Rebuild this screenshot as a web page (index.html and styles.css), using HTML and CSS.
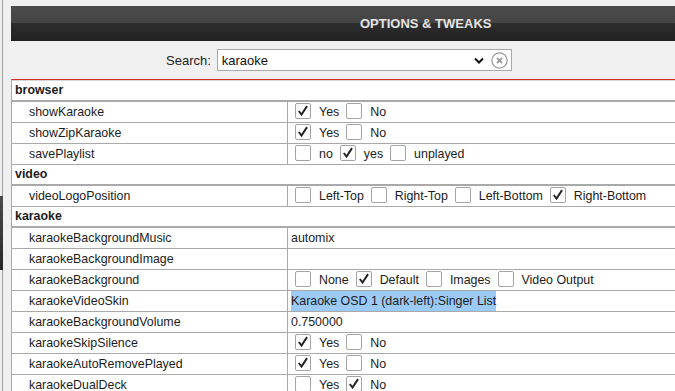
FILE: index.html
```html
<!DOCTYPE html>
<html lang="en">
<head>
    <meta charset="UTF-8">
    <meta name="viewport" content="width=device-width, initial-scale=1.0">
    <link rel="stylesheet" href="styles.css">
</head>
<body>
    <div class="edge">
        <div class="edge-thumb"></div>
    </div>
    <div class="main">
        <div class="titlebar">
            <h1>OPTIONS &amp; TWEAKS</h1>
        </div>

        <div class="search-row">
            <label for="search">Search:</label>
            <div class="search-box">
                <input type="text" id="search" value="karaoke">
                <svg class="chevron" width="10" height="7" viewBox="0 0 10 7"><path d="M1 1.5 L5 5.5 L9 1.5" fill="none" stroke="#111" stroke-width="2"/></svg>
                <svg class="clear" width="17" height="17" viewBox="0 0 17 17"><circle cx="8.5" cy="8.5" r="7.6" fill="none" stroke="#9a9a9a" stroke-width="1.3"/><path d="M6 6 L11 11 M11 6 L6 11" stroke="#9a9a9a" stroke-width="1.8"/></svg>
            </div>
        </div>

        <div class="options">
            <div class="group first">browser</div>
            <div class="opt">
                <div class="opt-name">showKaraoke</div>
                <div class="opt-value checks">
                    <span class="cb on"><svg viewBox="0 0 16 16"><path d="M3.2 8 L6.3 12 L12.6 2.4"/></svg></span><span class="lbl">Yes</span>
                    <span class="cb"></span><span class="lbl">No</span>
                </div>
            </div>
            <div class="opt">
                <div class="opt-name">showZipKaraoke</div>
                <div class="opt-value checks">
                    <span class="cb on"><svg viewBox="0 0 16 16"><path d="M3.2 8 L6.3 12 L12.6 2.4"/></svg></span><span class="lbl">Yes</span>
                    <span class="cb"></span><span class="lbl">No</span>
                </div>
            </div>
            <div class="opt">
                <div class="opt-name">savePlaylist</div>
                <div class="opt-value checks">
                    <span class="cb"></span><span class="lbl">no</span>
                    <span class="cb on"><svg viewBox="0 0 16 16"><path d="M3.2 8 L6.3 12 L12.6 2.4"/></svg></span><span class="lbl">yes</span>
                    <span class="cb"></span><span class="lbl">unplayed</span>
                </div>
            </div>

            <div class="group">video</div>
            <div class="opt">
                <div class="opt-name">videoLogoPosition</div>
                <div class="opt-value checks">
                    <span class="cb"></span><span class="lbl">Left-Top</span>
                    <span class="cb"></span><span class="lbl">Right-Top</span>
                    <span class="cb"></span><span class="lbl">Left-Bottom</span>
                    <span class="cb on"><svg viewBox="0 0 16 16"><path d="M3.2 8 L6.3 12 L12.6 2.4"/></svg></span><span class="lbl">Right-Bottom</span>
                </div>
            </div>

            <div class="group">karaoke</div>
            <div class="opt">
                <div class="opt-name">karaokeBackgroundMusic</div>
                <div class="opt-value">automix</div>
            </div>
            <div class="opt">
                <div class="opt-name">karaokeBackgroundImage</div>
                <div class="opt-value"></div>
            </div>
            <div class="opt">
                <div class="opt-name">karaokeBackground</div>
                <div class="opt-value checks">
                    <span class="cb"></span><span class="lbl">None</span>
                    <span class="cb on"><svg viewBox="0 0 16 16"><path d="M3.2 8 L6.3 12 L12.6 2.4"/></svg></span><span class="lbl">Default</span>
                    <span class="cb"></span><span class="lbl">Images</span>
                    <span class="cb"></span><span class="lbl">Video Output</span>
                </div>
            </div>
            <div class="opt">
                <div class="opt-name">karaokeVideoSkin</div>
                <div class="opt-value"><span class="selected">Karaoke OSD 1 (dark-left):Singer List</span></div>
            </div>
            <div class="opt">
                <div class="opt-name">karaokeBackgroundVolume</div>
                <div class="opt-value">0.750000</div>
            </div>
            <div class="opt">
                <div class="opt-name">karaokeSkipSilence</div>
                <div class="opt-value checks">
                    <span class="cb on"><svg viewBox="0 0 16 16"><path d="M3.2 8 L6.3 12 L12.6 2.4"/></svg></span><span class="lbl">Yes</span>
                    <span class="cb"></span><span class="lbl">No</span>
                </div>
            </div>
            <div class="opt">
                <div class="opt-name">karaokeAutoRemovePlayed</div>
                <div class="opt-value checks">
                    <span class="cb on"><svg viewBox="0 0 16 16"><path d="M3.2 8 L6.3 12 L12.6 2.4"/></svg></span><span class="lbl">Yes</span>
                    <span class="cb"></span><span class="lbl">No</span>
                </div>
            </div>
            <div class="opt">
                <div class="opt-name">karaokeDualDeck</div>
                <div class="opt-value checks">
                    <span class="cb"></span><span class="lbl">Yes</span>
                    <span class="cb on"><svg viewBox="0 0 16 16"><path d="M3.2 8 L6.3 12 L12.6 2.4"/></svg></span><span class="lbl">No</span>
                </div>
            </div>
        </div>
    </div>
</body>
</html>
```

FILE: styles.css
```css
body {
    font-family: "Liberation Sans", Arial, Helvetica, sans-serif;
    background-color: #f0f0f0;
    color: #1c1c1c;
    height: 100vh;
    margin: 0;
    display: flex;
    overflow: hidden;
}

/* thin edge of the panel on the left */
.edge {
    width: 2px;
    border-right: 1px solid #9c9c9c;
    margin-right: 8px;
}
.edge-thumb {
    margin-top: 196px;
    height: 74px;
    width: 3px;
    background: linear-gradient(#4a4a4a, #2a2a2a);
}

.main {
    flex: 1;
    min-width: 0;
    padding-top: 6px;
    overflow: hidden;
}

.titlebar {
    height: 35px;
    background: linear-gradient(#4b4b4b, #444 48%, #2d2d2d 50%, #222);
}
.titlebar h1 {
    margin: 0;
    padding: 1px 0 0 349px;
    font-size: 13px;
    line-height: 34px;
    font-weight: bold;
    color: #e4e4e4;
    white-space: nowrap;
}

.search-row {
    display: flex;
    align-items: center;
    padding: 8px 0 8px 155px;
}
.search-row label {
    font-size: 13px;
    margin-right: 6px;
    color: #222;
}
.search-box {
    width: 295px;
    height: 22px;
    box-sizing: border-box;
    border: 1px solid #a8a8a8;
    background: #fff;
    display: flex;
    align-items: center;
}
.search-box input {
    flex: 1;
    min-width: 0;
    border: none;
    outline: none;
    padding: 0 0 0 4px;
    font-family: inherit;
    font-size: 13px;
    color: #111;
    background: transparent;
}
.search-box .chevron {
    margin-right: 7px;
}
.search-box .clear {
    margin-right: 3px;
}

.options {
    width: calc(100% + 20px);
    background: #fff;
    border-top: 1px solid #d52b2b;
    border-left: 1px solid #a9a9a9;
    font-size: 12.4px;
}

.group {
    height: 19px;
    line-height: 19px;
    padding-left: 3px;
    font-weight: bold;
    border-bottom: 2px solid #a9a9a9;
}
.group.first {
    border-top: 1px solid #d6d6d6;
}

.opt {
    display: flex;
    height: 20px;
    line-height: 20px;
    border-bottom: 1px solid #a9a9a9;
}
.opt-name {
    width: 276px;
    box-sizing: border-box;
    padding-left: 17px;
    border-right: 1px solid #a9a9a9;
    white-space: nowrap;
}
.opt-value {
    flex: 1;
    display: flex;
    align-items: center;
    padding-left: 3px;
    white-space: nowrap;
}
.opt-value.checks {
    padding-left: 7px;
}

.cb {
    width: 16px;
    height: 16px;
    box-sizing: border-box;
    border: 1px solid #a4a4a4;
    border-radius: 2px;
    background: #fff;
    margin-bottom: 2px;
    display: inline-flex;
}
.cb svg {
    width: 14px;
    height: 14px;
}
.cb svg path {
    fill: none;
    stroke: #222;
    stroke-width: 2.2;
}
.lbl {
    margin: 0 7px 0 8px;
}

.selected {
    display: inline-block;
    height: 20px;
    background-color: #9ccaf7;
}
```
